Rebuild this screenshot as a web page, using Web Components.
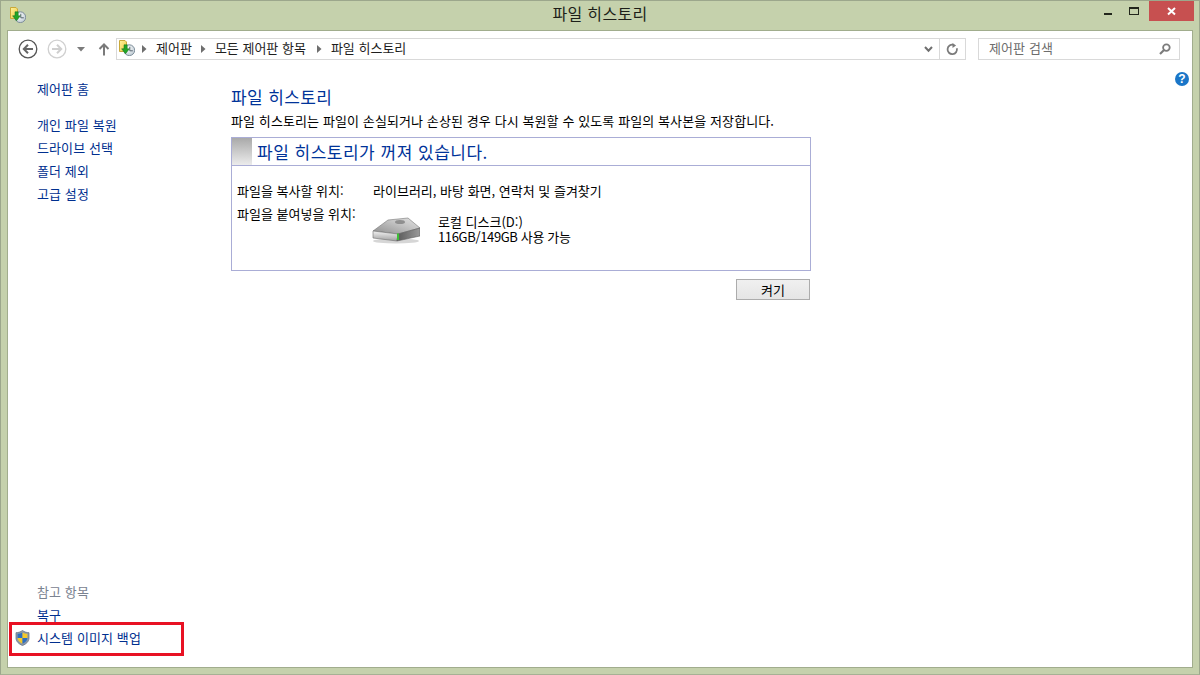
<!doctype html>
<html lang="ko">
<head>
<meta charset="utf-8">
<style>
html,body{margin:0;height:100%;overflow:hidden}
body{font:13px/16px "Noto Sans CJK KR","Liberation Sans",sans-serif;color:#000}
</style>
</head>
<body>
<fh-window caption="파일 히스토리">
  <fh-nav></fh-nav>
  <fh-content>
    <fh-side slot="side"></fh-side>
    <fh-main></fh-main>
  </fh-content>
</fh-window>

<script>
const HIST_ICON = `
<svg width="16" height="16" viewBox="0 0 16 16">
  <defs>
    <linearGradient id="fd" x1="0" y1="0" x2="1" y2="1"><stop offset="0" stop-color="#fff3a0"/><stop offset="1" stop-color="#eec83c"/></linearGradient>
    <radialGradient id="ck" cx=".4" cy=".35" r=".8"><stop offset="0" stop-color="#fff"/><stop offset="1" stop-color="#b4c2cc"/></radialGradient>
  </defs>
  <path d="M.5.5h5.500l1.500 1.500v9.500H.5z" fill="url(#fd)" stroke="#c9a93a"/>
  <circle cx="10.300" cy="10.200" r="5.400" fill="url(#ck)" stroke="#7f8f9b"/>
  <path d="M10.800 6.800V10.800h3" fill="none" stroke="#56646e" stroke-width="1"/>
  <path d="M5 4.800h3.200v4h2.200L6.500 13.800 2.600 8.800h2.400z" fill="#22a526" stroke="#12701a" stroke-width=".5"/>
</svg>`

const define = (name, html, init) => {
  customElements.define(name, class extends HTMLElement {
    connectedCallback(){
      if(this.shadowRoot) return
      this.attachShadow({mode:"open"}).innerHTML = typeof html === "function" ? html(this) : html
      if(init) init(this)
    }
  })
}

define("fh-window", (el) => `
<style>
:host{display:flex;flex-direction:column;box-sizing:border-box;width:1200px;height:675px;
  background:#c5d1ac;border:1px solid #9ca78c;border-bottom-color:#a6b194;padding:0 6px 6px 6px}
.bar{display:flex;align-items:flex-start;height:29px;flex:none;position:relative}
.ico{margin:6px 0 0 3px;height:16px}
.cap{position:absolute;left:0;right:0;top:2px;text-align:center;font-size:16px;line-height:20px;color:#1d1f19;letter-spacing:.3px}
.btns{margin-left:auto;display:flex;margin-right:-1px;position:relative}
.b{width:29px;height:20px;display:flex;align-items:center;justify-content:center}
.close{width:45px;background:#c75050}
.body{flex:1;min-height:0;display:flex;flex-direction:column;background:#fff;border:1px solid #a1ad8d}
</style>
<div class="bar">
  <span class="ico">${HIST_ICON}</span>
  <div class="cap">${el.getAttribute("caption")}</div>
  <div class="btns">
    <div class="b" style="margin-right:-5px"><svg width="10" height="10"><rect x="1" y="7" width="8" height="2" fill="#22261c"/></svg></div>
    <div class="b" style="margin-left:3px"><svg width="11" height="9"><rect x=".5" y=".5" width="9" height="7" fill="none" stroke="#22261c"/><rect x="0" y="0" width="10" height="2" fill="#22261c"/></svg></div>
    <div class="b close"><svg width="10" height="9"><path d="M1 1l7 6.500M8 1L1 7.500" stroke="#fff" stroke-width="2"/></svg></div>
  </div>
</div>
<div class="body"><slot></slot></div>`)

define("fh-nav", `
<style>
:host{display:flex;align-items:center;flex:none;height:38px;padding:0 12px 0 10px;color:#1e1e1e;margin-top:-1px}
.round{display:flex;margin-right:9px}
.drop{margin:0 13px 0 0;display:flex}
.up{margin-right:6px;display:flex}
.addr{flex:1;height:20px;border:1px solid #d9d9d9;display:flex;align-items:center;position:relative;min-width:0}
.addr .hi{margin:-2px 0 0 2px;height:16px}
.sep{margin:0 9px 0 11px;display:flex}
.crumb{white-space:nowrap;margin-top:-2px}
.chev{margin-left:auto;display:flex;width:22px;justify-content:center}
.ref{width:25px;height:20px;border-left:1px solid #d9d9d9;display:flex;align-items:center;justify-content:center}
.search{flex:none;box-sizing:border-box;width:202px;height:22px;border:1px solid #d9d9d9;margin-left:12px;display:flex;align-items:center;color:#6d6d6d;padding:0 0 2px 10px;letter-spacing:.1px}
.search svg{margin-left:auto;margin-right:8px;margin-top:2px}
</style>
<span class="round"><svg width="20" height="20"><circle cx="10" cy="10" r="8.800" fill="#fff" stroke="#555" stroke-width="1.300"/><path d="M15 10H6M10 5.800L5.800 10l4.200 4.200" fill="none" stroke="#666" stroke-width="2"/></svg></span>
<span class="round" style="margin-right:10px"><svg width="20" height="20"><circle cx="10" cy="10" r="8.800" fill="#fff" stroke="#d0d0d0" stroke-width="1.300"/><path d="M5 10h9M10 5.800l4.200 4.200-4.200 4.200" fill="none" stroke="#cfcfcf" stroke-width="2"/></svg></span>
<span class="drop"><svg width="8" height="5"><path d="M0 0h8L4 4.500z" fill="#7b7b7b"/></svg></span>
<span class="up"><svg width="12" height="13"><path d="M6 12.500V1.500M1.500 6L6 1.500 10.500 6" fill="none" stroke="#7a7a7a" stroke-width="2"/></svg></span>
<div class="addr">
  <span class="hi">${HIST_ICON}</span>
  <span class="sep" style="margin-left:7px"><svg width="5" height="8"><path d="M0 0l4.500 4L0 8z" fill="#6e6e6e"/></svg></span>
  <span class="crumb">제어판</span>
  <span class="sep" style="margin-left:9px"><svg width="5" height="8"><path d="M0 0l4.500 4L0 8z" fill="#6e6e6e"/></svg></span>
  <span class="crumb">모든 제어판 항목</span>
  <span class="sep"><svg width="5" height="8"><path d="M0 0l4.500 4L0 8z" fill="#6e6e6e"/></svg></span>
  <span class="crumb">파일 히스토리</span>
  <span class="chev"><svg width="9" height="7"><path d="M1 1l3.500 3.800L8 1" fill="none" stroke="#6f6f6f" stroke-width="2"/></svg></span>
  <span class="ref"><svg width="13" height="13" viewBox="0 0 13 13"><path d="M10.800 5.200A4.700 4.700 0 1 1 7.500 1.900" fill="none" stroke="#7b7b7b" stroke-width="1.800"/><path d="M6.500 0v5l3.600-2.500z" fill="#7b7b7b"/></svg></span>
</div>
<div class="search">제어판 검색
  <svg width="12" height="12" viewBox="0 0 12 12"><circle cx="7.400" cy="4.600" r="3.300" fill="none" stroke="#7b7b7b" stroke-width="1.800"/><path d="M5 7L1 11" stroke="#7b7b7b" stroke-width="2.200"/></svg>
</div>`)

define("fh-content", `
<style>
:host{display:grid;grid-template-columns:223px 1fr;flex:1;min-height:0;position:relative}
.help{position:absolute;top:4px;right:3px;width:14px;height:14px;border-radius:50%;background:#1a76c8;color:#fff;font:bold 12px/14px "Liberation Sans",sans-serif;text-align:center}
</style>
<slot name="side"></slot>
<slot></slot>
<span class="help">?</span>`)

define("fh-side", `
<style>
:host{display:flex;flex-direction:column;padding:13px 0 0 29px;position:relative;color:#002f8f;letter-spacing:.1px}
a{display:block;line-height:16px;height:23px;color:#002f8f}
.first{margin-bottom:13px}
.foot{margin-top:auto;padding-bottom:21px}
.see{color:#7a8290;height:23px;line-height:16px}
.mark{position:absolute;left:1px;bottom:11px;width:169px;height:28px;border:3px solid #e81123;pointer-events:none}
.sys{display:flex;position:relative}
.sys svg{position:absolute;left:-22px;top:0}
</style>
<a class="first">제어판 홈</a>
<a>개인 파일 복원</a>
<a>드라이브 선택</a>
<a>폴더 제외</a>
<a>고급 설정</a>
<div class="foot">
  <div class="see">참고 항목</div>
  <a>복구</a>
  <a class="sys" style="height:16px">
    <svg width="15" height="16" viewBox="0 0 15 16"><path d="M7.500.5C5.500 2 3.500 2.600 1 2.700V8c0 3.400 2.700 6 6.500 7.500C11.300 14 14 11.400 14 8V2.700C11.500 2.600 9.500 2 7.500.5z" fill="#8c98a8" stroke="#6a7686" stroke-width=".8"/><path d="M7.500 2.400V8H2.600V3.800C4.400 3.700 6 3.300 7.500 2.400z" fill="#2d6fc0"/><path d="M7.500 2.400C9 3.300 10.600 3.700 12.400 3.800V8H7.500z" fill="#f4c92a"/><path d="M2.600 8H7.500v5.700C5 12.600 2.800 10.800 2.600 8z" fill="#f4c92a"/><path d="M7.500 8h4.900c-.2 2.800-2.400 4.600-4.900 5.700z" fill="#2d6fc0"/></svg>
    시스템 이미지 백업
  </a>
  <div class="mark"></div>
</div>`)

define("fh-main", `
<style>
:host{display:block;width:580px}
h1{font-weight:400;font-size:17px;line-height:22px;color:#003399;margin:18px 0 0;letter-spacing:.4px}
p{margin:5px 0 0;height:16px;letter-spacing:.1px;white-space:nowrap}
.card{margin-top:8px;box-sizing:border-box;height:134px;border:1px solid #aaadd6}
.head{display:flex;height:27px;border-bottom:1px solid #aaadd6}
.grad{width:20px;background:linear-gradient(#a9a9a9,#ececec)}
.title{margin-left:5px;font-size:17px;line-height:28px;color:#003399;letter-spacing:.5px;white-space:nowrap}
.rows{padding:17px 0 0 5px;display:grid;grid-template-columns:136px 1fr;row-gap:7px;white-space:nowrap}
.drive{display:flex;margin-top:1px}
.drive svg{margin-top:10px;margin-left:-1px}
.drive div{margin-left:18px;padding-top:7px}
.drive span{display:block;line-height:15px}
.drive .used{letter-spacing:-.35px}
.act{display:flex;justify-content:flex-end;margin-top:8px}
button{box-sizing:border-box;width:74px;height:21px;margin-right:1px;padding:0;border:1px solid #acacac;background:linear-gradient(#f0f0f0,#e5e5e5);font:13px/16px "Noto Sans CJK KR",sans-serif;color:#000}
</style>
<h1>파일 히스토리</h1>
<p>파일 히스토리는 파일이 손실되거나 손상된 경우 다시 복원할 수 있도록 파일의 복사본을 저장합니다.</p>
<div class="card">
  <div class="head"><div class="grad"></div><div class="title">파일 히스토리가 꺼져 있습니다.</div></div>
  <div class="rows">
    <span>파일을 복사할 위치:</span><span>라이브러리, 바탕 화면, 연락처 및 즐겨찾기</span>
    <span>파일을 붙여넣을 위치:</span>
    <div class="drive">
      <svg width="48" height="27" viewBox="0 0 48 27">
        <defs>
          <linearGradient id="top" x1="0" y1="1" x2="1" y2="0"><stop offset="0" stop-color="#8d8d8d"/><stop offset=".6" stop-color="#c4c4c4"/><stop offset="1" stop-color="#e2e2e2"/></linearGradient>
          <linearGradient id="fr" x1="0" y1="0" x2="0" y2="1"><stop offset="0" stop-color="#f2f2f2"/><stop offset="1" stop-color="#a0a0a0"/></linearGradient>
          <linearGradient id="rs" x1="0" y1="0" x2="1" y2="0"><stop offset="0" stop-color="#5a5a5a"/><stop offset="1" stop-color="#9a9a9a"/></linearGradient>
        </defs>
        <ellipse cx="24" cy="24" rx="23" ry="2.500" fill="#d6d6d6"/>
        <path d="M1 14L16 3l20-2 12 10-22 6z" fill="url(#top)" stroke="#777" stroke-width=".6"/>
        <ellipse cx="28" cy="5" rx="5" ry="2" fill="#8f8f8f"/>
        <path d="M1 14l25 3-1 7-24-3z" fill="url(#fr)" stroke="#6e6e6e" stroke-width=".6"/>
        <path d="M26 17l22-6v8l-23 5z" fill="url(#rs)" stroke="#5f5f5f" stroke-width=".6"/>
        <rect x="25" y="16.500" width="2" height="6.500" fill="#3cc034"/>
      </svg>
      <div><span>로컬 디스크(D:)</span><span class="used">116GB/149GB 사용 가능</span></div>
    </div>
  </div>
</div>
<div class="act"><button>켜기</button></div>`)
</script>
</body>
</html>
